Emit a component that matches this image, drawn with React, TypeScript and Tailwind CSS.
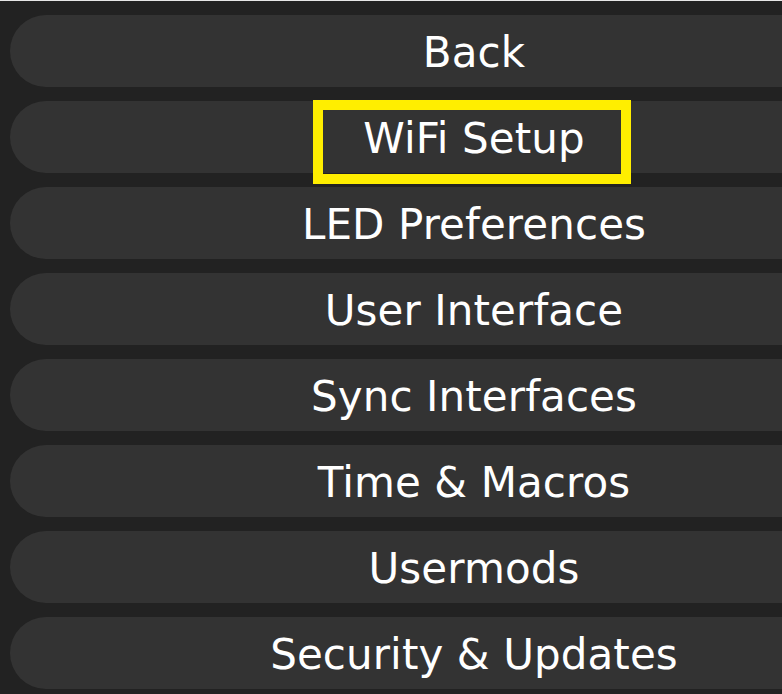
import React from 'react';

const items = [
  'Back',
  'WiFi Setup',
  'LED Preferences',
  'User Interface',
  'Sync Interfaces',
  'Time & Macros',
  'Usermods',
  'Security & Updates',
];

export default function App() {
  return (
    <div
      className="relative h-[694px] w-[782px] overflow-hidden border-t border-[#e6e6e6] bg-[#222222] pt-[14px]"
      style={{ fontFamily: '"DejaVu Sans", Verdana, sans-serif' }}
    >
      <div className="flex flex-col gap-[14px] pl-[10px]">
        {items.map((label) => (
          <button
            key={label}
            className="flex h-[72px] w-[928px] shrink-0 items-center justify-center rounded-full bg-[#333333] pt-[4px] text-[42px] leading-none tracking-[0.1px] text-white"
          >
            {label}
          </button>
        ))}
      </div>
      {/* focus highlight */}
      <div className="pointer-events-none absolute left-[313px] top-[99px] h-[84px] w-[318px] border-[10px] border-[#ffee00]" />
    </div>
  );
}
